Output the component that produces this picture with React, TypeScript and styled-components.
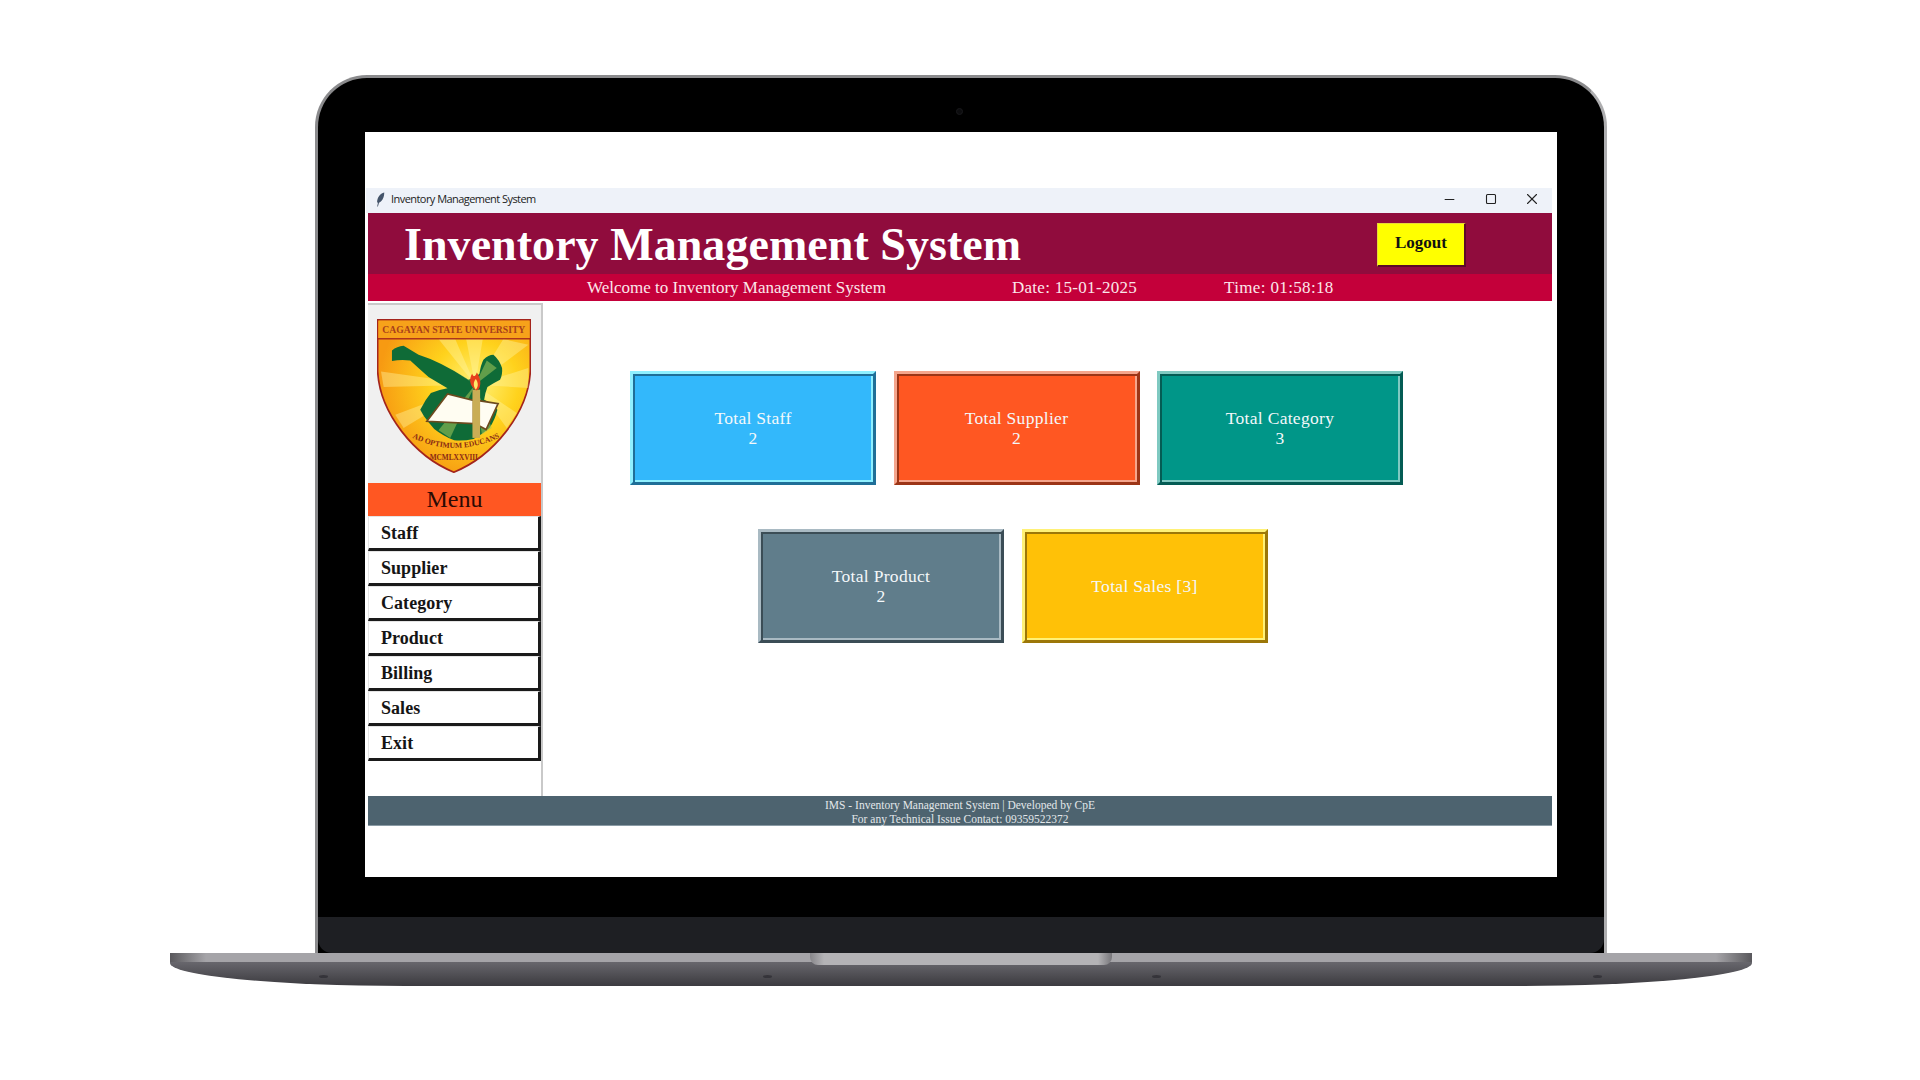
import React from 'react'
import styled, { createGlobalStyle } from 'styled-components'
import { Minus, Square, X } from 'lucide-react'

const GlobalStyle = createGlobalStyle`
  html, body {
    margin: 0;
    padding: 0;
    background: #fff;
  }
`

const serif = `"Liberation Serif", "Times New Roman", serif`

const CardTone = {
  staff: { bg: '#33b8fb', light: '#8ff0ff', dark: '#1f6f98' },
  supplier: { bg: '#ff5722', light: '#f5a58c', dark: '#9c3517' },
  category: { bg: '#009688', light: '#7fc9c1', dark: '#045c54' },
  product: { bg: '#607d8b', light: '#a9bac3', dark: '#3b4d56' },
  sales: { bg: '#ffc107', light: '#fff176', dark: '#9c7708' },
}

const menuItems = ['Staff', 'Supplier', 'Category', 'Product', 'Billing', 'Sales', 'Exit']

const Page = styled.div`
  width: 1920px;
  height: 1080px;
  overflow: hidden;
  padding-top: 75px;
  padding-left: 2px;
  box-sizing: border-box;
  display: flex;
  flex-direction: column;
  align-items: center;
  font-family: ${serif};
  background: #fff;
`

const Lid = styled.div`
  position: relative;
  width: 1292px;
  height: 878px;
  box-sizing: border-box;
  flex: none;
  background: #000;
  border: solid #8b8b8d;
  border-width: 3px 3px 0;
  border-right-color: #aeaeb0;
  border-radius: 52px 52px 0 0;
  padding: 54px 47px 0;
  display: flex;
  flex-direction: column;
  overflow: hidden;
`

const Camera = styled.div`
  position: absolute;
  top: 30px;
  left: 638px;
  width: 7px;
  height: 7px;
  border-radius: 50%;
  background: #0c0c0e;
  border: 1px solid #19191c;
  box-sizing: border-box;
`

const Screen = styled.div`
  width: 1192px;
  height: 745px;
  flex: none;
  box-sizing: border-box;
  background: #fff;
  padding: 56px 5px 51px 1px;
  display: flex;
`

const Chin = styled.div`
  margin: 40px -47px 0;
  flex: 1;
  background: #1e1f23;
  border-radius: 0 0 14px 14px;
`

const Window = styled.div`
  flex: 1;
  display: flex;
  flex-direction: column;
  min-width: 0;
`

const TitleBar = styled.div`
  height: 25px;
  flex: none;
  background: #eef2f9;
  display: flex;
  align-items: center;
  padding: 0 0 3px 10px;
  box-sizing: border-box;
  color: #222;
  font-family: "Open Sans", "Noto Sans", sans-serif;
  font-size: 11px;
  letter-spacing: -0.55px;
`

const TitleText = styled.span`
  margin-left: 6px;
  padding-bottom: 1px;
  flex: 1;
`

const WindowControl = styled.span`
  width: 41px;
  display: flex;
  justify-content: center;
  color: #222;
`

const WindowBody = styled.div`
  flex: 1;
  min-height: 0;
  display: flex;
  flex-direction: column;
  padding-left: 2px;
`

const Header = styled.header`
  height: 61px;
  flex: none;
  background: #900c3d;
  display: flex;
  align-items: center;
  justify-content: space-between;
  padding: 0 86px 3px 36px;
  box-sizing: border-box;
`

const AppTitle = styled.h1`
  margin: 4px 0 0;
  color: #fff;
  font-size: 46px;
  font-weight: 700;
  letter-spacing: 0.05px;
  white-space: nowrap;
`

const LogoutButton = styled.button`
  width: 89px;
  height: 44px;
  margin-top: 5px;
  box-sizing: border-box;
  background: #ffff00;
  border: solid #5c0a28;
  border-width: 1px 2px 2px 1px;
  border-top-color: #e8d83a;
  border-left-color: #e8d83a;
  color: #111;
  font-family: ${serif};
  font-size: 17px;
  font-weight: 700;
  padding: 0 0 2px;
`

const InfoBar = styled.div`
  height: 27px;
  flex: none;
  background: #c4003a;
  color: #fbe6ea;
  display: flex;
  align-items: center;
  padding-left: 219px;
  box-sizing: border-box;
  font-size: 17px;
  white-space: nowrap;
`

const InfoDate = styled.span`
  margin-left: 126px;
  letter-spacing: 0.3px;
`

const InfoTime = styled.span`
  margin-left: 87px;
  letter-spacing: 0.35px;
`

const Main = styled.div`
  flex: 1;
  min-height: 0;
  margin-top: 2px;
  display: flex;
`

const Sidebar = styled.aside`
  width: 175px;
  flex: none;
  box-sizing: border-box;
  border-right: 2px solid #c9c9c9;
  border-top: 2px solid #c9c9c9;
  display: flex;
  flex-direction: column;
`

const LogoPanel = styled.div`
  height: 178px;
  flex: none;
  background: #f0f0f0;
  padding: 14px 0 0 9px;
  box-sizing: border-box;
`

const MenuTitle = styled.div`
  height: 33px;
  flex: none;
  background: #ff5722;
  color: #2a0a04;
  font-size: 24px;
  text-align: center;
  line-height: 32px;
`

const MenuButton = styled.button`
  height: 35px;
  flex: none;
  box-sizing: border-box;
  background: #fff;
  border: solid #1a1a1a;
  border-width: 1px 3px 3px 1px;
  border-top-color: #e4e4e4;
  border-left-color: #e4e4e4;
  color: #151515;
  font-family: ${serif};
  font-size: 18px;
  font-weight: 700;
  letter-spacing: 0.05px;
  text-align: left;
  padding: 2px 0 0 12px;
`

const Dashboard = styled.main`
  flex: 1;
  min-width: 0;
  padding-top: 68px;
  display: flex;
  flex-direction: column;
  gap: 44px;
`

const CardRow = styled.div<{ $inset: number }>`
  display: flex;
  gap: 17.5px;
  padding-left: ${(p) => p.$inset}px;
`

const Card = styled.div<{ $tone: keyof typeof CardTone }>`
  width: 246px;
  height: 114px;
  box-sizing: border-box;
  background: ${(p) => CardTone[p.$tone].bg};
  border: 3px solid;
  border-color: ${(p) => `${CardTone[p.$tone].light} ${CardTone[p.$tone].dark} ${CardTone[p.$tone].dark} ${CardTone[p.$tone].light}`};
  box-shadow: inset 2px 2px 0 ${(p) => CardTone[p.$tone].dark}, inset -2px -2px 0 ${(p) => CardTone[p.$tone].light};
  display: flex;
  flex-direction: column;
  align-items: center;
  justify-content: center;
  color: #f4f8fa;
  font-size: 17.5px;
  line-height: 20px;
  letter-spacing: 0.3px;
  text-align: center;
`

const Footer = styled.footer`
  height: 30px;
  flex: none;
  background: #4d636f;
  border-bottom: 1px solid #8a9ba5;
  color: #e2e7ea;
  font-size: 11.5px;
  line-height: 13.5px;
  text-align: center;
  box-sizing: border-box;
  padding-top: 3px;
`

const Base = styled.div`
  position: relative;
  width: 1582px;
  height: 33px;
  flex: none;
  background: linear-gradient(#6f6e74 0, #66656b 10px, #48474c 26px, #3c3b40 33px);
  border-radius: 0 0 235px 235px / 0 0 23px 23px;
`

const BaseLip = styled.div`
  height: 9px;
  background: linear-gradient(90deg, #59585c 0, #a5a4a8 36px, #a5a4a8 calc(100% - 36px), #59585c 100%);
`

const Notch = styled.div`
  position: absolute;
  top: 0;
  left: 640px;
  width: 302px;
  height: 12px;
  border-radius: 0 0 8px 8px;
  background: linear-gradient(90deg, #87868a 0, #b4b3b6 14px, #b4b3b6 calc(100% - 14px), #77767a 100%);
`

const Foot = styled.span<{ $left: number }>`
  position: absolute;
  top: 22px;
  left: ${(p) => p.$left}px;
  width: 9px;
  height: 3px;
  border-radius: 50%;
  background: #35343a;
`

const Logo = () => (
  <svg width="154" height="154" viewBox="50 58 463 462">
    <defs>
      <radialGradient id="shieldFill" gradientUnits="userSpaceOnUse" cx="345" cy="255" r="290">
        <stop offset="0" stopColor="#fff27a" />
        <stop offset="0.45" stopColor="#ffd21c" />
        <stop offset="1" stopColor="#f79a12" />
      </radialGradient>
      <path id="mottoArc" d="M143 408 Q280 482 432 408" />
    </defs>
    <path
      d="M52 60 H511 V215 C505 340 400 470 281 518 C162 470 58 340 52 215 Z"
      fill="url(#shieldFill)"
      stroke="#a3241c"
      strokeWidth="5"
    />
    <g fill="#fff6a6" opacity="0.4">
      <polygon points="345,255 235,118 285,118" />
      <polygon points="345,255 318,118 368,118" />
      <polygon points="345,255 430,118 505,135" />
      <polygon points="345,255 505,205 505,265" />
      <polygon points="345,255 62,215 70,262" />
      <polygon points="345,255 105,345 130,385" />
      <polygon points="345,255 470,340 440,385" />
    </g>
    <rect x="54" y="62" width="455" height="54" fill="#f7a21a" />
    <rect x="52" y="115" width="459" height="4" fill="#a3241c" />
    <text x="281" y="100" textAnchor="middle" fontFamily={serif} fontWeight="700" fontSize="31" fill="#a8401a" textLength="430" lengthAdjust="spacingAndGlyphs">
      CAGAYAN STATE UNIVERSITY
    </text>
    <path
      d="M95 152 Q110 140 130 138 Q150 150 175 165 Q240 185 325 240 Q345 235 358 222 Q362 195 370 180 Q385 165 400 165 Q418 180 426 205 Q428 225 420 240 Q400 250 382 262 Q375 280 372 300 Q395 310 412 330 Q405 360 388 385 Q365 405 340 418 Q310 425 282 422 Q250 410 222 388 L205 368 Q190 350 180 330 Q195 300 212 280 Q240 270 262 266 Q235 250 205 232 Q175 205 150 182 Q120 178 95 184 Z"
      fill="#0f6b37"
    />
    <g fill="#a5c85a" opacity="0.55">
      <polygon points="345,255 380,182 410,205" />
      <polygon points="345,255 270,205 325,240" />
      <polygon points="345,255 270,415 235,392" />
      <polygon points="345,255 395,385 365,405" />
    </g>
    <polygon points="200,365 262,283 340,302 340,372" fill="#fffdf2" stroke="#6d4a1e" strokeWidth="5" />
    <polygon points="345,372 350,302 414,312 378,390" fill="#fffdf2" stroke="#6d4a1e" strokeWidth="5" />
    <rect x="337" y="270" width="23" height="145" fill="#c9ad55" />
    <path d="M347 272 C328 258 326 238 336 222 C340 232 345 232 350 218 C360 232 364 250 358 264 C355 270 352 272 347 272 Z" fill="#e7401c" />
    <path d="M347 270 C338 258 340 246 347 238 C354 248 356 260 347 270 Z" fill="#ffe96a" />
    <text fontFamily={serif} fontWeight="700" fontSize="23" fill="#8a2a14">
      <textPath href="#mottoArc" startOffset="50%" textAnchor="middle">
        AD OPTIMUM EDUCANS
      </textPath>
    </text>
    <text x="281" y="482" textAnchor="middle" fontFamily={serif} fontWeight="700" fontSize="22" fill="#8a2a14">
      MCMLXXVIII
    </text>
  </svg>
)

const Feather = () => (
  <svg width="9" height="15" viewBox="0 0 8 14">
    <path d="M7.5 0.5 C3.5 1.5 1 5 0.8 9.5 L1.6 10 L0.9 13.5 L1.6 13.5 L2.6 10 C6 8.5 7.5 4.5 7.5 0.5 Z" fill="#44546a" />
  </svg>
)

export default function App() {
  return (
    <Page>
      <GlobalStyle />
      <Lid>
        <Camera />
        <Screen>
          <Window>
            <TitleBar>
              <Feather />
              <TitleText>Inventory Management System</TitleText>
              <WindowControl><Minus size={15} absoluteStrokeWidth strokeWidth={1.1} /></WindowControl>
              <WindowControl><Square size={12} absoluteStrokeWidth strokeWidth={1.1} /></WindowControl>
              <WindowControl><X size={18} absoluteStrokeWidth strokeWidth={1.1} /></WindowControl>
            </TitleBar>
            <WindowBody>
              <Header>
                <AppTitle>Inventory Management System</AppTitle>
                <LogoutButton>Logout</LogoutButton>
              </Header>
              <InfoBar>
                <span>Welcome to Inventory Management System</span>
                <InfoDate>Date: 15-01-2025</InfoDate>
                <InfoTime>Time: 01:58:18</InfoTime>
              </InfoBar>
              <Main>
                <Sidebar>
                  <LogoPanel><Logo /></LogoPanel>
                  <MenuTitle>Menu</MenuTitle>
                  {menuItems.map((item) => (
                    <MenuButton key={item}>{item}</MenuButton>
                  ))}
                </Sidebar>
                <Dashboard>
                  <CardRow $inset={87}>
                    <Card $tone="staff"><span>Total Staff</span><span>2</span></Card>
                    <Card $tone="supplier"><span>Total Supplier</span><span>2</span></Card>
                    <Card $tone="category"><span>Total Category</span><span>3</span></Card>
                  </CardRow>
                  <CardRow $inset={215}>
                    <Card $tone="product"><span>Total Product</span><span>2</span></Card>
                    <Card $tone="sales"><span>Total Sales [3]</span></Card>
                  </CardRow>
                </Dashboard>
              </Main>
              <Footer>
                IMS - Inventory Management System | Developed by CpE
                <br />
                For any Technical Issue Contact: 09359522372
              </Footer>
            </WindowBody>
          </Window>
        </Screen>
        <Chin />
      </Lid>
      <Base>
        <BaseLip />
        <Notch />
        <Foot $left={149} />
        <Foot $left={593} />
        <Foot $left={982} />
        <Foot $left={1423} />
      </Base>
    </Page>
  )
}
